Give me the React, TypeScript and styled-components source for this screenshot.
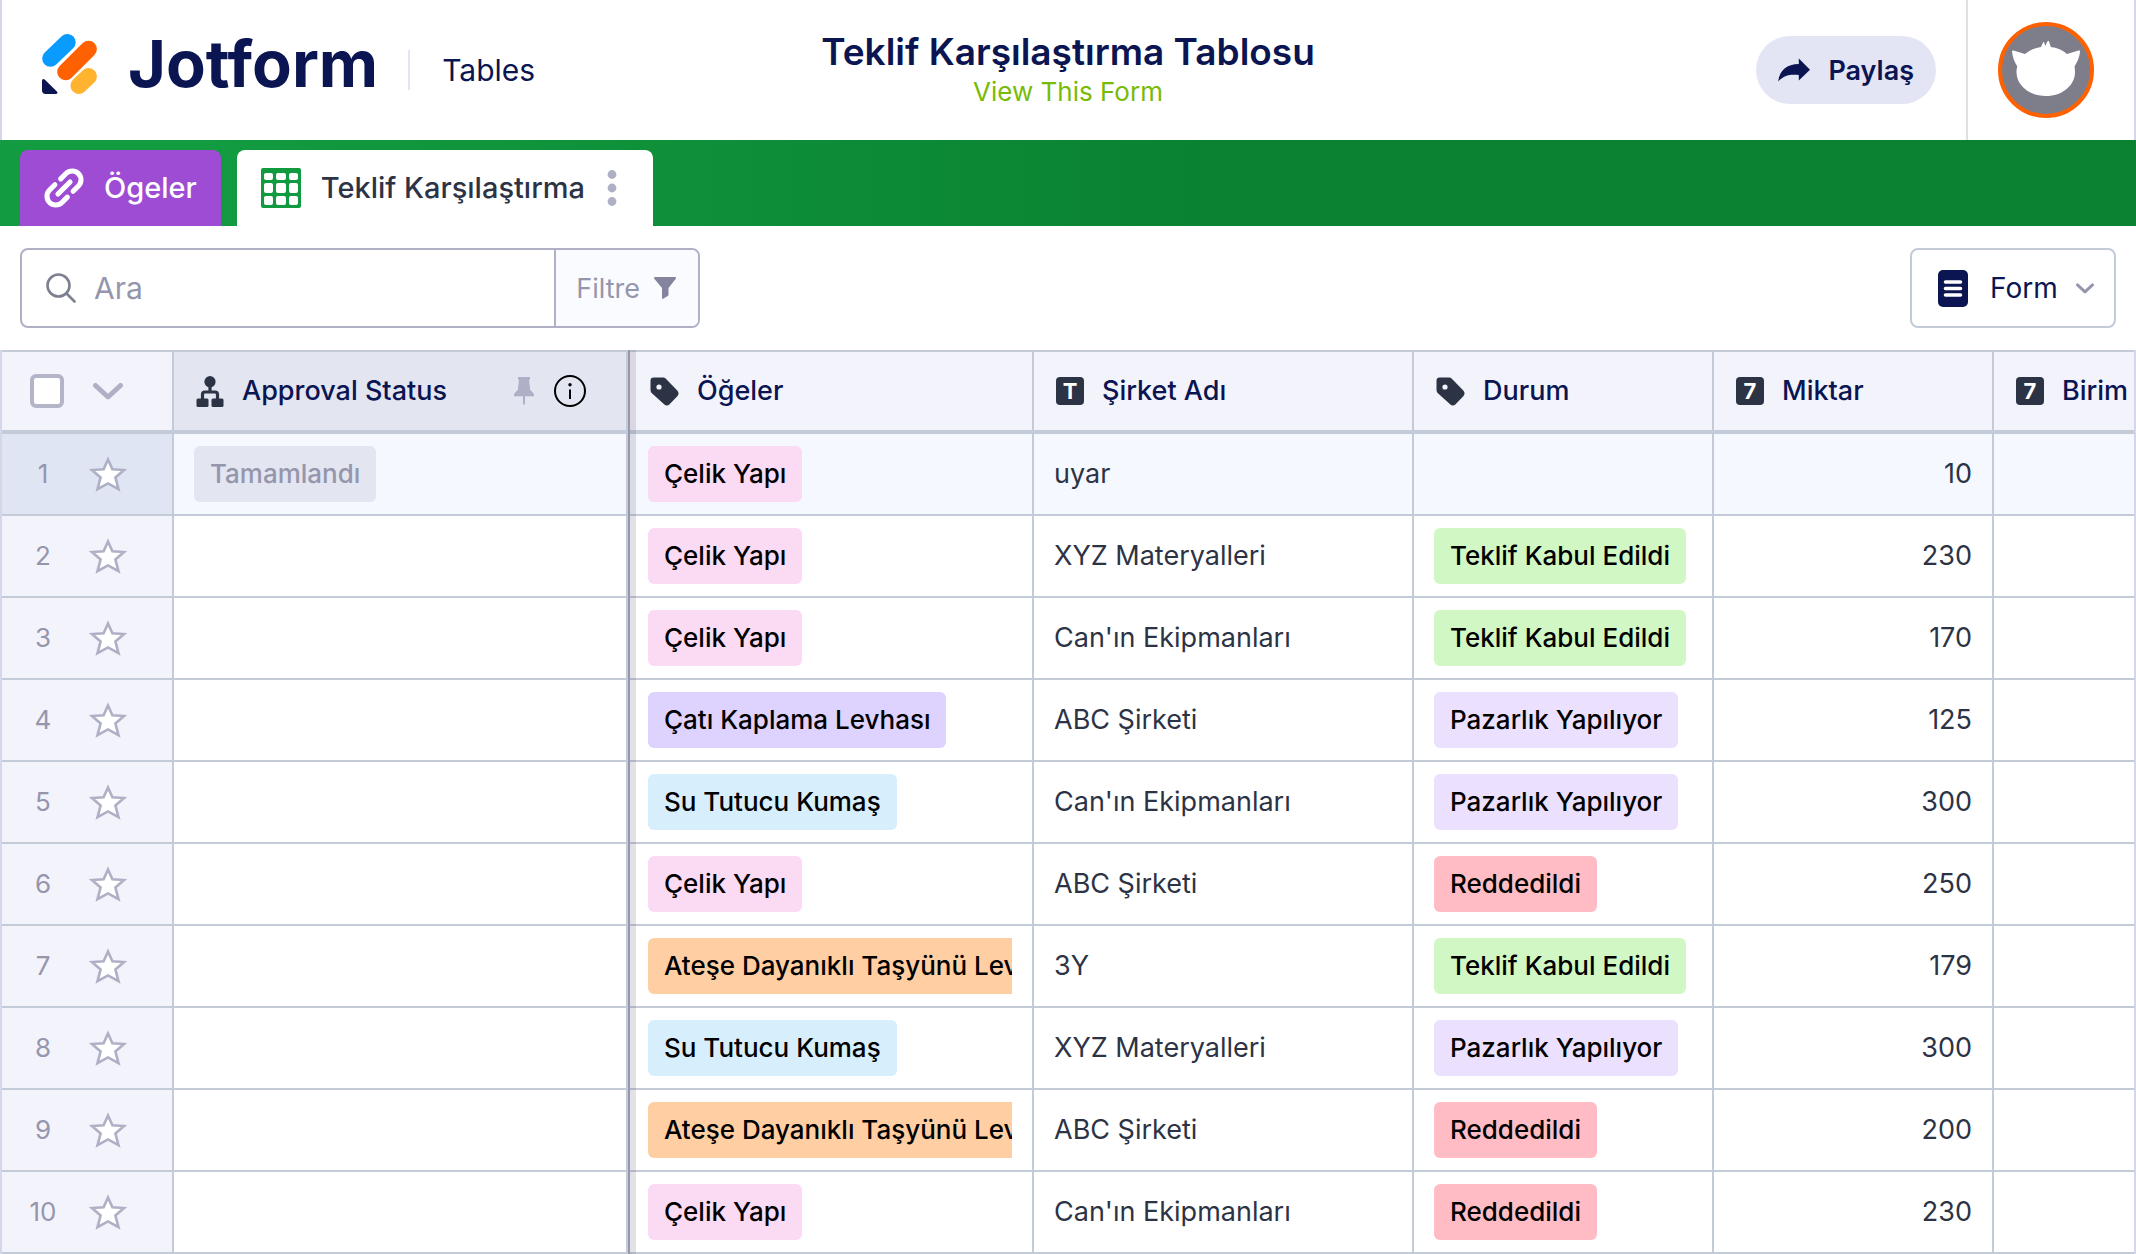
import React from 'react';
import styled, { createGlobalStyle } from 'styled-components';

const ink = '#0a1551';
const slate = '#2c3345';
const line = '#c3cad8';
const muted = '#afb0c6';
const dim = '#9596ac';

const GlobalStyle = createGlobalStyle`
  *, *::before, *::after { box-sizing: border-box; }
  body { margin: 0; background: #fff; }
  body, button, input, select { font-family: Inter, "Noto Sans", "Liberation Sans", sans-serif; }
  svg { display: block; flex: none; }
  button, input, select { margin: 0; }
`;

const Page = styled.div`
  min-height: 100vh;
  overflow: hidden;
  color: ${slate};
`;

/* ---------- top bar ---------- */

const TopBar = styled.header`
  display: grid;
  grid-template-columns: 1fr auto 1fr;
  height: 140px;
  border: solid #d5d6ea;
  border-width: 0 2px;
`;

const Brand = styled.div`
  display: flex;
  align-items: center;
  padding-left: 40px;
`;

const BrandLink = styled.a`
  display: flex;
  align-items: center;
  gap: 30px;
  padding-bottom: 12px;
  color: ${ink};
  text-decoration: none;
`;

const Wordmark = styled.span`
  font-size: 65px;
  line-height: 72px;
  font-weight: 700;
`;

const Product = styled.span`
  margin-left: 30px;
  padding-left: 32px;
  border-left: 2px solid #e3e5f5;
  font-size: 30px;
  line-height: 40px;
  font-weight: 400;
  color: ${ink};
`;

const Heading = styled.div`
  display: flex;
  flex-direction: column;
  align-items: center;
  padding-top: 30px;
`;

const Title = styled.h1`
  margin: 0;
  font-size: 37px;
  line-height: 44px;
  font-weight: 600;
  color: ${ink};
  white-space: nowrap;
`;

const FormLink = styled.a`
  font-size: 26px;
  line-height: 36px;
  color: #78bb07;
  text-decoration: none;
`;

const Account = styled.div`
  display: flex;
  justify-content: flex-end;
  align-items: center;
`;

const ShareButton = styled.button`
  display: flex;
  align-items: center;
  gap: 18px;
  height: 68px;
  margin-right: 30px;
  padding: 0 22px;
  border: 0;
  border-radius: 34px;
  background: #e3e5f5;
  font-size: 27px;
  font-weight: 600;
  color: ${ink};
`;

const AvatarCell = styled.div`
  display: flex;
  align-items: center;
  align-self: stretch;
  padding: 0 40px 0 30px;
  border-left: 2px solid #e0e0e3;
`;

const Avatar = styled.button`
  width: 96px;
  height: 96px;
  padding: 0;
  border: 4px solid #ff6100;
  border-radius: 50%;
  background: #7d7e8a;
`;

/* ---------- tabs ---------- */

const TabBar = styled.nav`
  display: flex;
  align-items: flex-end;
  gap: 16px;
  height: 86px;
  padding: 0 20px;
  background: linear-gradient(90deg, #129b40 0, #129b40 10%, #0a8231 57%);
`;

const Tab = styled.div<{ $active?: boolean }>`
  display: flex;
  align-items: center;
  height: 76px;
  padding: 0 ${p => (p.$active ? '32px' : '24px')} 0 24px;
  border-radius: 8px 8px 0 0;
  background: ${p => (p.$active ? '#fff' : '#9d4cd3')};
  color: ${p => (p.$active ? slate : '#fff')};
`;

const TabButton = styled.button`
  display: flex;
  align-items: center;
  gap: 20px;
  padding: 0;
  border: 0;
  background: none;
  color: inherit;
  font-size: 29px;
  line-height: 40px;
  font-weight: 500;
`;

const DotsButton = styled.button`
  margin-left: 18px;
  padding: 4px;
  border: 0;
  background: none;
`;

/* ---------- toolbar ---------- */

const Toolbar = styled.div`
  display: flex;
  justify-content: space-between;
  padding: 22px 20px;
`;

const SearchGroup = styled.div`
  display: flex;
  width: 680px;
  height: 80px;
  border: 2px solid ${muted};
  border-radius: 8px;
  overflow: hidden;
`;

const SearchLabel = styled.label`
  display: flex;
  flex: 1;
  align-items: center;
  gap: 18px;
  min-width: 0;
  padding-left: 24px;
`;

const SearchInput = styled.input`
  flex: 1;
  min-width: 0;
  height: 100%;
  padding: 0;
  border: 0;
  outline: 0;
  background: none;
  font-size: 30px;
  color: ${slate};
  &::placeholder { color: ${dim}; opacity: 1; }
`;

const FilterButton = styled.button`
  display: flex;
  align-items: center;
  gap: 14px;
  padding: 0 22px 0 20px;
  border: 0;
  border-left: 2px solid ${muted};
  background: #fafbff;
  font-size: 27px;
  color: ${dim};
`;

const ViewPicker = styled.label`
  display: flex;
  align-items: center;
  height: 80px;
  padding: 0 20px 0 26px;
  border: 2px solid ${line};
  border-radius: 8px;
`;

const ViewSelect = styled.select`
  appearance: none;
  margin: 0 18px 0 22px;
  padding: 0;
  border: 0;
  background: none;
  font-size: 28px;
  line-height: 40px;
  font-weight: 400;
  color: ${ink};
`;

/* ---------- grid ---------- */

const Sheet = styled.table`
  width: 100%;
  table-layout: fixed;
  border-collapse: separate;
  border-spacing: 0;
  border-left: 2px solid #d5d6ea;
  border-right: 2px solid #d5d6ea;
`;

const Col = styled.col<{ $width?: number }>`
  width: ${p => (p.$width ? `${p.$width}px` : 'auto')};
`;

const pinned = `
  position: relative;
  z-index: 1;
  box-shadow: 2px 0 0 #9798ae, 8px 0 0 rgba(110, 105, 125, 0.2);
`;

const HeadCell = styled.th<{ $pinned?: boolean; $last?: boolean }>`
  height: 84px;
  padding: 0 22px;
  border-top: 2px solid ${line};
  border-bottom: 4px solid ${line};
  border-right: ${p => (p.$last ? '0' : `2px solid ${line}`)};
  background: ${p => (p.$pinned ? '#e3e5f1' : '#f3f3fc')};
  text-align: left;
  overflow: ${p => (p.$pinned ? 'visible' : 'hidden')};
  ${p => (p.$pinned ? pinned : '')}
`;

const HeadContent = styled.div`
  display: flex;
  align-items: center;
  gap: 18px;
  font-size: 27px;
  line-height: 36px;
  font-weight: 550;
  color: ${ink};
  white-space: nowrap;
`;

const HeadTools = styled.span`
  display: flex;
  align-items: center;
  gap: 20px;
  margin-left: auto;
  margin-right: 18px;
`;

const PlainButton = styled.button`
  padding: 0;
  border: 0;
  background: none;
`;

const TypeBadge = styled.span`
  display: flex;
  flex: none;
  align-items: center;
  justify-content: center;
  width: 28px;
  height: 28px;
  border-radius: 4px;
  background: ${slate};
  color: #fff;
  font-size: 22px;
  line-height: 28px;
  font-weight: 700;
`;

const Row = styled.tr<{ $selected?: boolean }>`
  background: ${p => (p.$selected ? '#f5f8ff' : '#fff')};
`;

const Cell = styled.td<{ $pinned?: boolean; $align?: string; $last?: boolean }>`
  height: 82px;
  padding: 0 20px;
  border-bottom: 2px solid ${line};
  border-right: ${p => (p.$last ? '0' : `2px solid ${line}`)};
  font-size: 27px;
  line-height: 36px;
  text-align: ${p => p.$align ?? 'left'};
  white-space: nowrap;
  ${p => (p.$pinned ? pinned : '')}
`;

const IndexCell = styled(Cell).attrs({ as: 'th', scope: 'row' })<{ $selected?: boolean }>`
  padding: 0;
  background: ${p => (p.$selected ? '#dfe5f3' : '#f3f3fc')};
  font-size: 26px;
  font-weight: 400;
  color: ${dim};
`;

const IndexContent = styled.div`
  display: grid;
  grid-template-columns: 82px 48px;
  align-items: center;
  justify-items: center;
`;

const IndexHead = styled(HeadCell)`
  padding: 0;
`;

const TickBox = styled.input`
  && { margin-left: 8px; }
  appearance: none;
  width: 34px;
  height: 34px;
  border: 4px solid #b4b4c8;
  border-radius: 6px;
  background: #fff;
`;

const Clip = styled.div`
  display: flex;
  overflow: hidden;
`;

const Chip = styled.span<{ $bg: string; $faded?: boolean }>`
  flex: none;
  padding: 10px 16px;
  border-radius: 6px;
  background: ${p => p.$bg};
  font-size: 26px;
  font-weight: 450;
  color: ${p => (p.$faded ? dim : '#000')};
`;

/* ---------- drawings ---------- */

const LogoMark = () => (
  <svg width="56" height="60" viewBox="0 0 56 60" aria-hidden="true">
    <g strokeWidth="16.6" strokeLinecap="round" fill="none">
      <path d="M8.5 24.5 25.4 8.3" stroke="#0a9bff" />
      <path d="M23.5 38 46.6 15" stroke="#ff6100" />
      <path d="M36.8 51.6 46.6 42.4" stroke="#ffb32e" />
    </g>
    <path d="M0 47.2c0-2 1.5-2.8 2.9-1.4L14.9 57.4c1.2 1.2.6 2.6-1.3 2.6H3.5C1.5 60 0 58.5 0 56.5Z" fill={ink} />
  </svg>
);

const ShareIcon = () => (
  <svg width="32" height="24" viewBox="0 0 32 24" aria-hidden="true">
    <path d="M.2 23.5C1.5 12 9 6.200 20.800 6V.5L32 11.800 20.800 22.500V17C12 16 5.500 17.500.2 23.500Z" fill={ink} />
  </svg>
);

const CatFace = () => (
  <svg width="88" height="88" viewBox="4 4 88 88" aria-hidden="true">
    <path
      fill="#fff"
      d="M14 29.500c0-1 .6-1.300 1.600-1L27 32c4.500-4 10-6.200 16-7l2-4.500c.5-.8 1-.6 1.300.2L47.200 24l2.400-4.700c.5-.9 1-.7 1.400.2L52.800 25c6.200.8 11.700 3 16.200 7l11.500-3.500c1-.3 1.600 0 1.600 1C81.500 35 79.300 40 76.500 44.500c.3 1.500.5 3 .5 5.500C77 63.500 64.500 74 48 74S18.500 63.500 18.500 50c0-2.500.3-4 .8-5.500C16.500 40 14.500 35 14 29.500Z"
    />
  </svg>
);

const LinkIcon = () => (
  <svg width="40" height="40" viewBox="2.2 2.2 19.6 19.6" aria-hidden="true">
    <g transform="rotate(-45 12 12)" fill="none" stroke="#fff" strokeWidth="2.5" strokeLinecap="round">
      <path d="M10 16.3H6.3a4.3 4.3 0 0 1 0-8.6H10" />
      <path d="M14 7.7h3.7a4.3 4.3 0 0 1 0 8.6H14" />
      <path d="M7.8 12h8.4" />
    </g>
  </svg>
);

const gridColumns = [[3, 9], [15, 10], [28, 9]];
const gridRows = [[5, 7], [15, 10], [28, 9]];

const GridIcon = () => (
  <svg width="40" height="40" viewBox="0 0 40 40" aria-hidden="true">
    <rect width="40" height="40" rx="2" fill="#119a3f" />
    {gridRows.map(([y, h]) =>
      gridColumns.map(([x, w]) => (
        <rect key={`${x}-${y}`} x={x} y={y} width={w} height={h} rx="2" fill="#fff" />
      ))
    )}
  </svg>
);

const DotsIcon = () => (
  <svg width="10" height="38" viewBox="0 0 10 38" fill={muted} aria-hidden="true">
    <circle cx="5" cy="5.5" r="4.4" />
    <circle cx="5" cy="19" r="4.4" />
    <circle cx="5" cy="32.5" r="4.4" />
  </svg>
);

const SearchIcon = () => (
  <svg width="30" height="30" viewBox="0 0 30 30" fill="none" stroke="#7c8090" strokeWidth="2.6" strokeLinecap="round" aria-hidden="true">
    <circle cx="12.5" cy="12.5" r="11" />
    <path d="m20.5 20.5 8 8" />
  </svg>
);

const FunnelIcon = () => (
  <svg width="22" height="22" viewBox="0 0 22 22" aria-hidden="true">
    <path d="M1 0h20c1 0 1.3 1 .8 1.8L14.5 11v6.5c0 .6-.2 1-.7 1.4L9.5 21.6c-.9.6-1.5.2-1.5-.7V11L.3 1.8C-.4 1 0 0 1 0Z" fill="#84849f" />
  </svg>
);

const FormIcon = () => (
  <svg width="30" height="37" viewBox="0 0 30 37" aria-hidden="true">
    <rect width="30" height="37" rx="5" fill={ink} />
    <path d="M7.5 12h15M7.5 18.5h15M7.5 25h15" stroke="#fff" strokeWidth="3.6" strokeLinecap="round" />
  </svg>
);

const Chevron = ({ width, height, color }: { width: number; height: number; color: string }) => (
  <svg width={width} height={height} viewBox="0 0 30 17" fill="none" aria-hidden="true">
    <path d="m2.5 2.5 12.5 11.500L27.500 2.500" stroke={color} strokeWidth="5" strokeLinecap="round" strokeLinejoin="round" />
  </svg>
);

const StarIcon = () => (
  <svg width="38" height="36" viewBox="0 0 38 36" aria-hidden="true">
    <path
      d="M19 3.5 23.4 13.3 35 14 26.4 21.4 29.5 33.2 19 27.4 8.5 33.2 11.6 21.4 3 14 14.6 13.3Z"
      fill="#fff"
      stroke={muted}
      strokeWidth="2.6"
    />
  </svg>
);

const ApprovalIcon = () => (
  <svg width="28" height="31" viewBox="0 0 28 31" aria-hidden="true">
    <g fill={slate}>
      <circle cx="14" cy="5.7" r="5.6" />
      <rect x="0.5" y="22.5" width="12" height="8.5" rx="1.5" />
      <rect x="15.5" y="22.5" width="12" height="8.5" rx="1.5" />
    </g>
    <path d="M14 10v6M6.5 23v-4.500c0-1.500.8-2.500 2.500-2.500h10c1.700 0 2.500 1 2.500 2.500V23" fill="none" stroke={slate} strokeWidth="3.2" />
  </svg>
);

const TagIcon = () => (
  <svg width="29" height="29" viewBox="0 0 29 29" aria-hidden="true">
    <path
      fillRule="evenodd"
      d="M3.5.5h9c1.500 0 2.600.4 3.600 1.400L27.300 13.600c1.700 1.800 1.700 4 0 5.700l-7.700 8c-1.700 1.700-3.800 1.700-5.500 0L1.900 16.200C.9 15.200.5 14.200.5 12.800V3.500C.5 1.700 1.700.5 3.500.5ZM9 7.400a2.600 2.600 0 1 0 0 5.200 2.600 2.600 0 0 0 0-5.200Z"
      fill={slate}
    />
  </svg>
);

const PinIcon = () => (
  <svg width="20" height="28" viewBox="0 0 20 28" fill={muted} aria-hidden="true">
    <path d="M4 0h12v2.500l-1 .8 1.200 9.500L20 17v2.300H0V17l3.800-4.200L5 3.300l-1-.8Z" />
    <path d="M9 19h2v8l-1 1-1-1Z" />
  </svg>
);

const InfoIcon = () => (
  <svg width="32" height="32" viewBox="0 0 32 32" aria-hidden="true">
    <circle cx="16" cy="16" r="15" fill="none" stroke="#000" strokeWidth="2" />
    <circle cx="16" cy="9.8" r="1.7" />
    <path d="M16 14.500V24" stroke="#000" strokeWidth="2" />
  </svg>
);

/* ---------- data ---------- */

const tones: Record<string, string> = {
  'Çelik Yapı': '#fbdaf3',
  'Çatı Kaplama Levhası': '#ded2fe',
  'Su Tutucu Kumaş': '#d7eefc',
  'Ateşe Dayanıklı Taşyünü Lev': '#ffcfa3',
  'Teklif Kabul Edildi': '#d1f7c4',
  'Pazarlık Yapılıyor': '#ebe1fe',
  Reddedildi: '#ffbcc4',
};

const rows: [string, string, string, number][] = [
  ['Çelik Yapı', 'uyar', '', 10],
  ['Çelik Yapı', 'XYZ Materyalleri', 'Teklif Kabul Edildi', 230],
  ['Çelik Yapı', "Can'ın Ekipmanları", 'Teklif Kabul Edildi', 170],
  ['Çatı Kaplama Levhası', 'ABC Şirketi', 'Pazarlık Yapılıyor', 125],
  ['Su Tutucu Kumaş', "Can'ın Ekipmanları", 'Pazarlık Yapılıyor', 300],
  ['Çelik Yapı', 'ABC Şirketi', 'Reddedildi', 250],
  ['Ateşe Dayanıklı Taşyünü Lev', '3Y', 'Teklif Kabul Edildi', 179],
  ['Su Tutucu Kumaş', 'XYZ Materyalleri', 'Pazarlık Yapılıyor', 300],
  ['Ateşe Dayanıklı Taşyünü Lev', 'ABC Şirketi', 'Reddedildi', 200],
  ['Çelik Yapı', "Can'ın Ekipmanları", 'Reddedildi', 230],
];

const columns = [
  { label: 'Öğeler', icon: <TagIcon /> },
  { label: 'Şirket Adı', icon: <TypeBadge aria-hidden="true">T</TypeBadge> },
  { label: 'Durum', icon: <TagIcon /> },
  { label: 'Miktar', icon: <TypeBadge aria-hidden="true">7</TypeBadge> },
  { label: 'Birim', icon: <TypeBadge aria-hidden="true">7</TypeBadge> },
];

const Tag = ({ value }: { value: string }) =>
  value ? (
    <Clip>
      <Chip $bg={tones[value]}>{value}</Chip>
    </Clip>
  ) : null;

export default function App() {
  return (
    <Page>
      <GlobalStyle />
      <TopBar>
        <Brand>
          <BrandLink href="#">
            <LogoMark />
            <Wordmark>Jotform</Wordmark>
          </BrandLink>
          <Product>Tables</Product>
        </Brand>
        <Heading>
          <Title>Teklif Karşılaştırma Tablosu</Title>
          <FormLink href="#">View This Form</FormLink>
        </Heading>
        <Account>
          <ShareButton type="button">
            <ShareIcon />
            Paylaş
          </ShareButton>
          <AvatarCell>
            <Avatar type="button" aria-label="Hesap">
              <CatFace />
            </Avatar>
          </AvatarCell>
        </Account>
      </TopBar>

      <TabBar>
        <Tab>
          <TabButton type="button">
            <LinkIcon />
            Ögeler
          </TabButton>
        </Tab>
        <Tab $active>
          <TabButton type="button" aria-current="page">
            <GridIcon />
            Teklif Karşılaştırma
          </TabButton>
          <DotsButton type="button" aria-label="Sekme menüsü">
            <DotsIcon />
          </DotsButton>
        </Tab>
      </TabBar>

      <Toolbar>
        <SearchGroup>
          <SearchLabel>
            <SearchIcon />
            <SearchInput type="search" placeholder="Ara" aria-label="Ara" />
          </SearchLabel>
          <FilterButton type="button">
            Filtre
            <FunnelIcon />
          </FilterButton>
        </SearchGroup>
        <ViewPicker>
          <FormIcon />
          <ViewSelect aria-label="Görünüm">
            <option>Form</option>
          </ViewSelect>
          <Chevron width={18} height={11} color={dim} />
        </ViewPicker>
      </Toolbar>

      <Sheet>
        <colgroup>
          <Col $width={172} />
          <Col $width={454} />
          <Col $width={406} />
          <Col $width={380} />
          <Col $width={300} />
          <Col $width={280} />
          <Col />
        </colgroup>
        <thead>
          <tr>
            <IndexHead>
              <IndexContent>
                <TickBox type="checkbox" aria-label="Tümünü seç" />
                <PlainButton type="button" aria-label="Seçim menüsü">
                  <Chevron width={30} height={17} color={muted} />
                </PlainButton>
              </IndexContent>
            </IndexHead>
            <HeadCell $pinned>
              <HeadContent>
                <ApprovalIcon />
                Approval Status
                <HeadTools>
                  <PlainButton type="button" aria-label="Sabitle">
                    <PinIcon />
                  </PlainButton>
                  <PlainButton type="button" aria-label="Bilgi">
                    <InfoIcon />
                  </PlainButton>
                </HeadTools>
              </HeadContent>
            </HeadCell>
            {columns.map((c, i) => (
              <HeadCell key={c.label} $last={i === columns.length - 1}>
                <HeadContent>
                  {c.icon}
                  {c.label}
                </HeadContent>
              </HeadCell>
            ))}
          </tr>
        </thead>
        <tbody>
          {rows.map(([item, company, status, amount], i) => (
            <Row key={i} $selected={i === 0}>
              <IndexCell $selected={i === 0}>
                <IndexContent>
                  {i + 1}
                  <PlainButton type="button" aria-label="Yıldızla">
                    <StarIcon />
                  </PlainButton>
                </IndexContent>
              </IndexCell>
              <Cell $pinned>
                {i === 0 && (
                  <Clip>
                    <Chip $bg="#e3e5f1" $faded>
                      Tamamlandı
                    </Chip>
                  </Clip>
                )}
              </Cell>
              <Cell>
                <Tag value={item} />
              </Cell>
              <Cell>{company}</Cell>
              <Cell>
                <Tag value={status} />
              </Cell>
              <Cell $align="right">{amount}</Cell>
              <Cell $last />
            </Row>
          ))}
        </tbody>
      </Sheet>
    </Page>
  );
}
